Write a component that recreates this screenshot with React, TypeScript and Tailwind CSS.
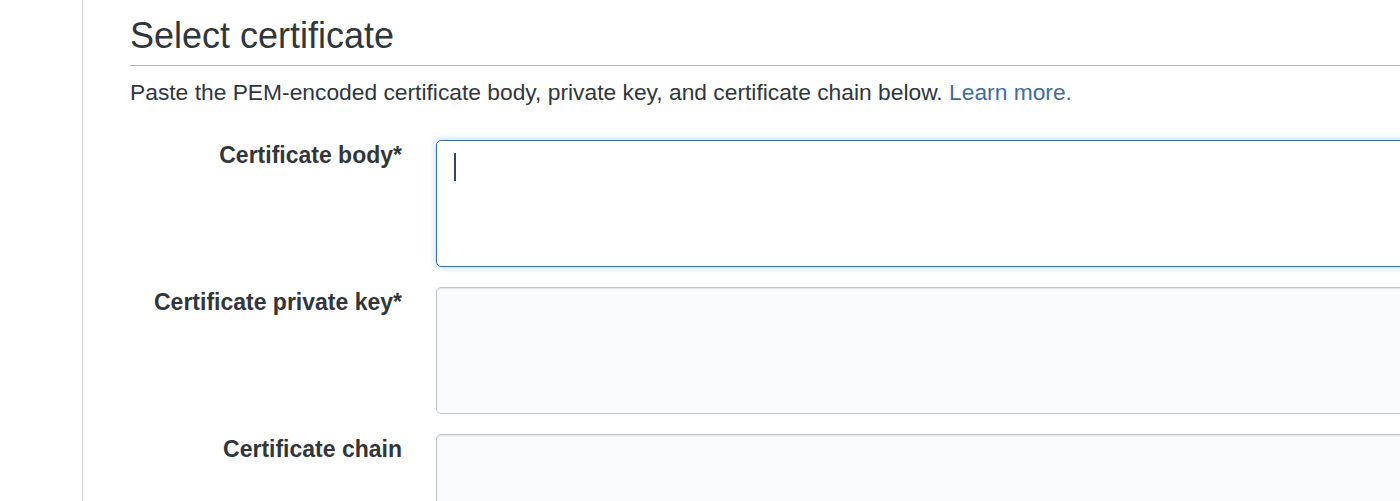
const fields = [
  { label: 'Certificate body*', focused: true },
  { label: 'Certificate private key*', focused: false },
  { label: 'Certificate chain', focused: false },
];

function Field({ label, focused }: { label: string; focused: boolean }) {
  return (
    <div className="flex items-start">
      <div className="w-[272px] shrink-0 pt-px text-right text-[23px] leading-[28px] font-bold text-[#31363b]">
        {label}
      </div>
      {focused ? (
        <div className="ml-[34px] w-[1100px] h-[127px] shrink-0 rounded-[5px] border border-[#3d6d99] bg-white shadow-[0_0_7px_rgba(102,175,233,0.55)] pl-[17px] pt-[12px]">
          <div className="w-[2px] h-[28px] bg-[#2a4a6a]" />
        </div>
      ) : (
        <div className="ml-[34px] w-[1100px] h-[127px] shrink-0 rounded-[5px] border border-[#c6c6c6] bg-[#fafbfc] shadow-[inset_0_1px_2px_rgba(0,0,0,0.1)]" />
      )}
    </div>
  );
}

export default function App() {
  return (
    <div className="flex h-[501px] w-full overflow-hidden bg-white font-['Liberation_Sans',Arial,sans-serif]">
      <div className="w-[82px] shrink-0" />
      <div className="flex-1 min-w-0 border-l border-[#cfcfcf] pl-[47px] pt-[16px]">
        <h2 className="text-[36px] leading-[40px] font-normal text-[#31363b]">Select certificate</h2>
        <div className="mt-[9px] border-t border-[#b5b5b5]" />
        <p className="mt-[12px] text-[22.8px] leading-[28px] text-[#31363b] whitespace-nowrap">
          Paste the PEM-encoded certificate body, private key, and certificate chain below.{' '}
          <a className="text-[#3f6d98]">Learn more.</a>
        </p>
        <div className="mt-[34px] flex flex-col gap-[20px]">
          {fields.map(f => (
            <Field key={f.label} label={f.label} focused={f.focused} />
          ))}
        </div>
      </div>
    </div>
  );
}
